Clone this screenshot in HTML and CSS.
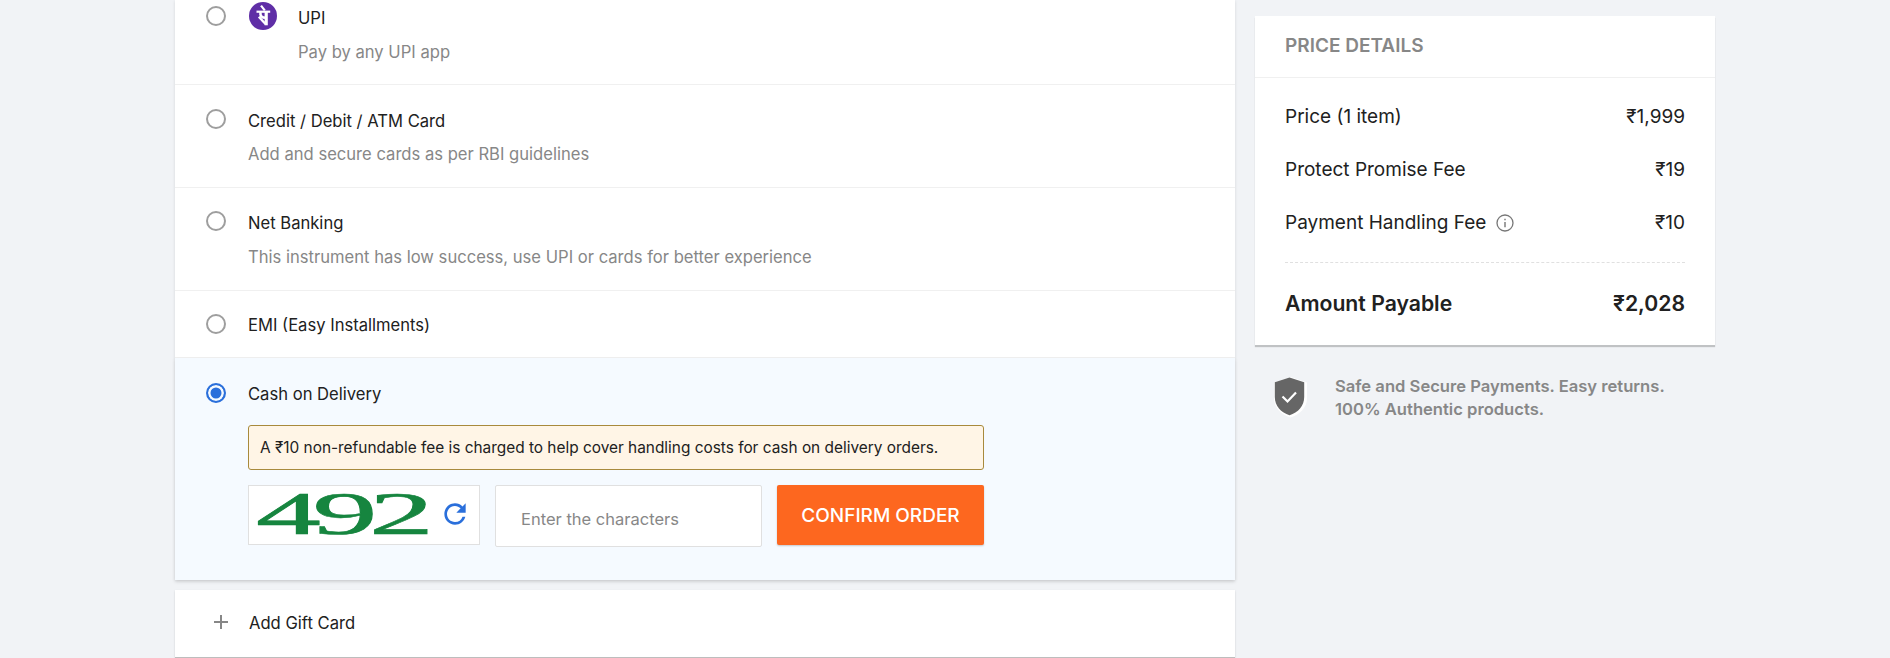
FILE: index.html
```html
<!DOCTYPE html>
<html lang="en">
<head>
<meta charset="utf-8">
<title>Payments</title>
<link rel="stylesheet" href="styles.css">
</head>
<body>
<div class="page">
  <main class="left">
    <section class="methods">
      <div class="row row-upi">
        <span class="radio"></span>
        <div class="upi-wrap">
          <svg class="upi-logo" viewBox="0 0 28 28" aria-hidden="true">
            <circle cx="14" cy="14" r="14" fill="#5f2ea6"/>
            <path d="M7.500 9.700H21.200" fill="none" stroke="#fff" stroke-width="2.200"/>
            <path d="M17.200 9.700V23.300" fill="none" stroke="#fff" stroke-width="3.200"/>
            <path d="M11.500 10c-.6 3.800 1 5.800 5.500 5.800" fill="none" stroke="#fff" stroke-width="2.600"/>
            <path d="M9.800 14.800L16.500 22" fill="none" stroke="#fff" stroke-width="2.400"/>
            <path d="M12 3.600L15.800 8.400" fill="none" stroke="#fff" stroke-width="2.200"/>
          </svg>
          <div class="texts">
            <div class="title">UPI</div>
            <div class="sub">Pay by any UPI app</div>
          </div>
        </div>
      </div>
      <div class="row row-std">
        <span class="radio"></span>
        <div class="texts">
          <div class="title">Credit / Debit / ATM Card</div>
          <div class="sub">Add and secure cards as per RBI guidelines</div>
        </div>
      </div>
      <div class="row row-std row-net">
        <span class="radio"></span>
        <div class="texts">
          <div class="title">Net Banking</div>
          <div class="sub">This instrument has low success, use UPI or cards for better experience</div>
        </div>
      </div>
      <div class="row row-emi">
        <span class="radio"></span>
        <div class="title">EMI (Easy Installments)</div>
      </div>
      <div class="row row-cod">
        <span class="radio radio-on"></span>
        <div class="cod-body">
          <div class="title">Cash on Delivery</div>
          <div class="notice">A ₹10 non-refundable fee is charged to help cover handling costs for cash on delivery orders.</div>
          <div class="confirm-row">
            <div class="captcha">
              <span class="captcha-code">492</span>
              <svg class="refresh" viewBox="0 0 24 24" aria-hidden="true">
                <path d="M17.65 6.35A7.958 7.958 0 0 0 12 4c-4.42 0-7.99 3.58-7.99 8s3.57 8 7.99 8c3.73 0 6.84-2.55 7.73-6h-2.08A5.99 5.99 0 0 1 12 18c-3.31 0-6-2.69-6-6s2.69-6 6-6c1.66 0 3.14.69 4.22 1.78L13 11h7V4l-2.35 2.35z" fill="#2a6fdb"/>
              </svg>
            </div>
            <input class="chars" type="text" placeholder="Enter the characters">
            <button class="confirm" type="button">CONFIRM ORDER</button>
          </div>
        </div>
      </div>
    </section>
    <section class="gift">
      <svg class="plus" viewBox="0 0 16 16" aria-hidden="true">
        <path d="M7 1h2v6h6v2H9v6H7V9H1V7h6z" fill="#878787"/>
      </svg>
      <span class="title">Add Gift Card</span>
    </section>
  </main>
  <aside class="right">
    <section class="price-card">
      <h2 class="price-head">PRICE DETAILS</h2>
      <div class="price-body">
        <div class="price-row"><span>Price (1 item)</span><span>₹1,999</span></div>
        <div class="price-row"><span>Protect Promise Fee</span><span>₹19</span></div>
        <div class="price-row">
          <span class="with-info">Payment Handling Fee
            <svg class="info" viewBox="0 0 18 18" aria-hidden="true">
              <circle cx="9" cy="9" r="8" fill="none" stroke="#777" stroke-width="1.300"/>
              <path d="M8.300 8h1.400v5.200H8.300zM8.300 4.800h1.400v1.500H8.300z" fill="#777"/>
            </svg>
          </span>
          <span>₹10</span>
        </div>
        <div class="total-row"><span>Amount Payable</span><span>₹2,028</span></div>
      </div>
    </section>
    <div class="safe">
      <svg class="shield" viewBox="0 0 35 42" aria-hidden="true">
        <path d="M17.500 1L34 6.500V22c0 9.500-7 16.500-16.500 19.500C8 38.500 1 31.500 1 22V6.500z" fill="#fff"/>
        <path d="M16.500 1.500L1.800 6.300V21c0 9 6.200 15.500 14.700 18.300C25 36.500 31.200 30 31.200 21V6.300z" fill="#666"/>
        <path d="M9.500 20.500l5 5 8.500-9" fill="none" stroke="#fff" stroke-width="2.200"/>
      </svg>
      <p class="safe-text">Safe and Secure Payments. Easy returns.<br>100% Authentic products.</p>
    </div>
  </aside>
</div>
</body>
</html>
```
FILE: styles.css
```css
* { box-sizing: border-box; }
html, body { margin: 0; height: 658px; overflow: hidden; }
body { background: #f1f3f6; font-family: "Inter", "Liberation Sans", sans-serif; color: #212121; }
.page { display: flex; gap: 20px; padding-left: 175px; }
.left { width: 1060px; flex: none; }
.right { width: 460px; flex: none; padding-top: 16px; }

.methods { background: #fff; box-shadow: 0 1px 3px rgba(0,0,0,.12); }
.row { display: flex; gap: 22px; padding-left: 31px; border-bottom: 1px solid #f0f0f0; }
.row-upi { height: 85px; padding-top: 6px; }
.row-std { height: 103px; padding-top: 24px; }
.row-std .texts { padding-top: 1px; }
.row-net { padding-top: 23px; }
.row-net .texts { gap: 14px; }
.row-emi { height: 67px; align-items: center; }
.row-cod { height: 222px; padding-top: 25px; background: #f5faff; border-bottom: 0; box-shadow: 0 2px 4px rgba(0,0,0,.08); }

.radio { width: 20px; height: 20px; flex: none; border-radius: 50%; border: 2px solid #9e9e9e; background: #fff; }
.radio-on { border-color: #2a6fdb; background: #2a6fdb; box-shadow: inset 0 0 0 2.500px #f5faff; }

.upi-wrap { display: flex; gap: 21px; margin-top: -4px; margin-left: 1px; }
.upi-logo { width: 28px; height: 28px; flex: none; }
.texts { display: flex; flex-direction: column; gap: 13px; }
.row-upi .texts { padding-top: 5px; gap: 14px; }
.title { padding-top: 1px; font-size: 16.600px; line-height: 20px; color: #212121; }
.sub { font-size: 16.600px; line-height: 20px; color: #878787; }

.cod-body { display: flex; flex-direction: column; width: 736px; }
.notice { margin-top: 21px; height: 45px; padding: 0 11px; display: flex; align-items: center; font-size: 15.400px; background: #fff5e6; border: 1px solid #a88a3c; border-radius: 3px; color: #212121; white-space: nowrap; }
.confirm-row { display: flex; margin-top: 15px; gap: 15px; align-items: flex-start; }
.captcha { width: 232px; height: 60px; flex: none; background: #fff; border: 1px solid #e0e0e0; display: flex; align-items: center; padding: 0 0 2px 7px; position: relative; }
.captcha-code { font-family: "Liberation Serif", serif; font-weight: 400; font-size: 61px; line-height: 58px; color: #16853f; -webkit-text-stroke: .6px #16853f; display: block; width: 172px; transform: scaleX(2.130); transform-origin: left center; letter-spacing: -4px; }
.refresh { width: 32px; height: 32px; position: absolute; left: 190px; top: 12px; }
.chars { width: 267px; height: 62px; flex: none; border: 1px solid #e0e0e0; border-radius: 2px; background: #fff; padding: 6px 25px 0; font: 16.500px "Inter", sans-serif; color: #212121; outline: 0; }
.chars::placeholder { color: #878787; opacity: 1; }
.confirm { width: 207px; height: 60px; flex: none; border: 0; border-radius: 2px; background: #fd671f; color: #fff; font: 500 19px "Inter", sans-serif; box-shadow: 0 1px 2px rgba(0,0,0,.2); }

.gift { margin-top: 10px; height: 68px; padding: 0 0 3px 38px; background: #fff; display: flex; align-items: center; gap: 20px; border-bottom: 1px solid #bdbdbd; box-shadow: 0 1px 2px rgba(0,0,0,.15); }
.plus { width: 16px; height: 16px; flex: none; }

.price-card { background: #fff; box-shadow: 0 2px 1px rgba(0,0,0,.2); }
.price-head { margin: 0; height: 62px; padding: 0 0 2px 30px; display: flex; align-items: center; font-size: 19px; font-weight: 600; color: #878787; border-bottom: 1px solid #f0f0f0; }
.price-body { padding: 12px 30px 0; height: 267px; }
.price-row { height: 53px; display: flex; justify-content: space-between; align-items: center; font-size: 19px; color: #212121; }
.with-info { display: flex; align-items: center; gap: 10px; }
.info { width: 18px; height: 18px; }
.total-row { margin-top: 13px; border-top: 1px dashed #e0e0e0; padding-top: 24px; display: flex; justify-content: space-between; font-size: 21.200px; line-height: 32px; font-weight: 600; color: #212121; }

.safe { display: flex; gap: 27px; padding: 30px 0 0 18px; }
.shield { width: 35px; height: 42px; flex: none; margin-top: 1px; }
.safe-text { margin: 0; font-size: 16.600px; line-height: 23px; font-weight: 600; color: #878787; }
```
